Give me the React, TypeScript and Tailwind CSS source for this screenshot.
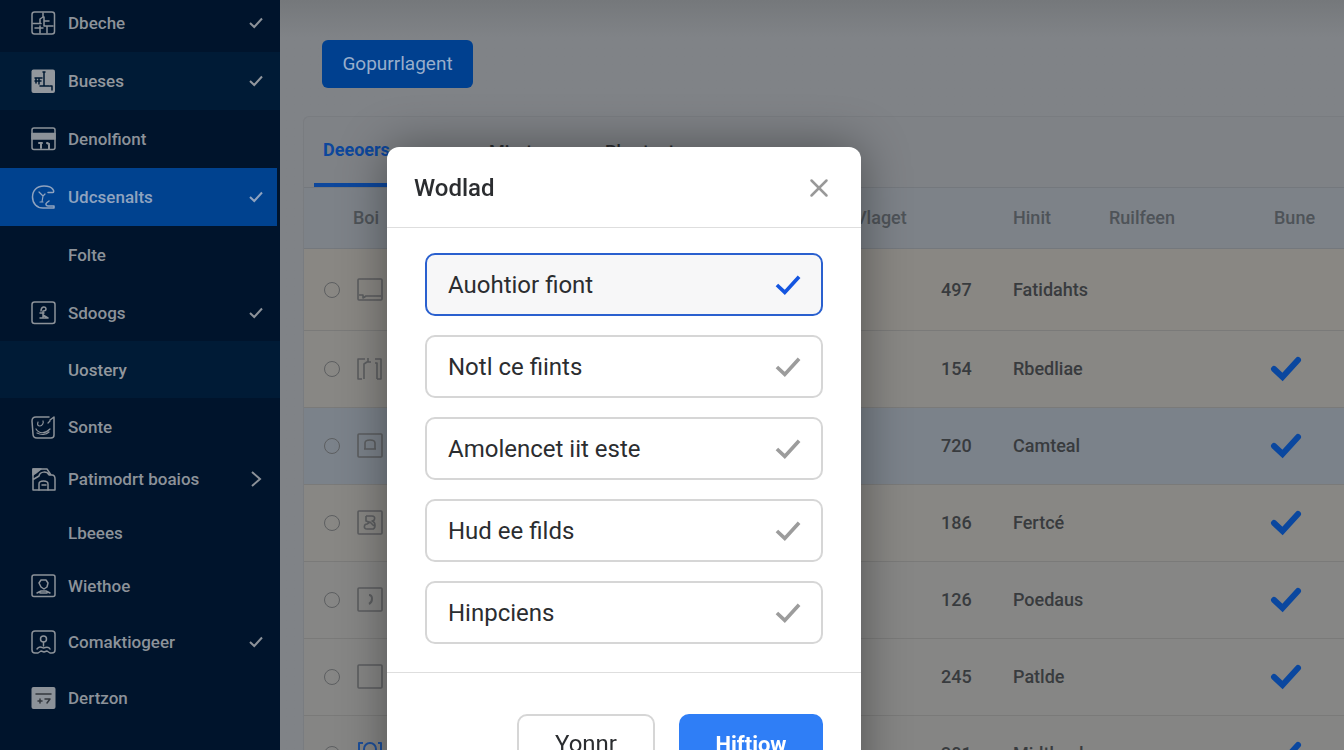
import { useState } from 'react';
import type { ReactNode } from 'react';
import { X } from 'lucide-react';

interface NavItem {
  label: string;
  height: string;
  icon?: ReactNode;
  trailing?: 'check' | 'arrow';
  tone?: 'active' | 'raised';
}

interface TableRow {
  count: string;
  name: string;
  icon: ReactNode;
  background: string;
  checked: boolean;
}

function NavIcon({ children }: { children: ReactNode }) {
  return (
    <svg viewBox="0 0 26 26" className="w-[26px] h-[26px]" fill="none" stroke="currentColor" strokeWidth="1.5" strokeLinecap="round" strokeLinejoin="round" aria-hidden="true">
      {children}
    </svg>
  );
}

function RowIcon({ children }: { children: ReactNode }) {
  return (
    <svg viewBox="0 0 28 28" className="block w-7 h-7" fill="none" stroke="currentColor" strokeWidth="1.6" strokeLinejoin="round" aria-hidden="true">
      {children}
    </svg>
  );
}

function Tick({ className, width, round }: { className: string; width: number; round?: boolean }) {
  return (
    <svg viewBox="0 0 32 26" className={className} fill="none" stroke="currentColor" strokeWidth={width} strokeLinecap={round ? 'round' : 'butt'} aria-hidden="true">
      <path d="M4 13l8.500 8L28 4" />
    </svg>
  );
}

const navItems: NavItem[] = [
  {
    label: 'Dbeche',
    height: 'h-[52px] pb-1.5',
    trailing: 'check',
    icon: (
      <NavIcon>
        <rect x="2" y="2" width="22.500" height="22" rx="2.500" />
        <path d="M13 3v4l-3 2v4M3 13.500h8M14 11h5M14 7v9M10 16v7M15 16h8M5 18h8M17 17v6" />
      </NavIcon>
    ),
  },
  {
    label: 'Bueses',
    height: 'h-[58px]',
    trailing: 'check',
    tone: 'raised',
    icon: (
      <NavIcon>
        <rect x="1.500" y="1.500" width="23.500" height="23.500" rx="2" fill="currentColor" stroke="none" />
        <g stroke="#001a33">
          <path d="M5 10h7M5 13h6M6 10v5M9 10v6M14 4v14h-4M13 4h2M15 18h4M20 18h2v4" />
        </g>
      </NavIcon>
    ),
  },
  {
    label: 'Denolfiont',
    height: 'h-[58px]',
    icon: (
      <NavIcon>
        <rect x="2" y="2" width="23" height="21.500" rx="2" />
        <path d="M2 7.500h23v5.500H2z" fill="currentColor" />
        <path d="M9 17h3M11 17v5M17 17l2 1v5" strokeWidth="2" />
      </NavIcon>
    ),
  },
  {
    label: 'Udcsenalts',
    height: 'h-[58px]',
    trailing: 'check',
    tone: 'active',
    icon: (
      <NavIcon>
        <path d="M18 8.500h4.500c1.500 0 1.500-1.500.5-3C21.500 3 18 2 14 2 7 2 2.500 6.500 2.500 13S7 24 13 24h11v-2h-6c-2 0-3-2-1-3.500l2-1.500" />
        <path d="M9 8l4 4 2-2M13 12l-1 6M10 18h3" strokeWidth="1.200" />
      </NavIcon>
    ),
  },
  { label: 'Folte', height: 'h-[58px]' },
  {
    label: 'Sdoogs',
    height: 'h-[57px]',
    trailing: 'check',
    icon: (
      <NavIcon>
        <rect x="2" y="2" width="23" height="21.500" rx="2.500" />
        <path d="M11 11c0-5 5-5 5-2 0 2-2 2-3 2v6M10 13h4M10 18h8M13 15l5 3" />
      </NavIcon>
    ),
  },
  { label: 'Uostery', height: 'h-[57px]', tone: 'raised' },
  {
    label: 'Sonte',
    height: 'h-[57px]',
    icon: (
      <NavIcon>
        <path d="M19 3H6C3 3 2 4 2 7l1 13c0 3 1 4 4 4h14c2 0 3-1 3-3V3l-4 3" />
        <path d="M8 8c-1 3 0 4 2 4s4-3 3-5M6 15c3 5 9 5 14 0M7 19c4 2 9 2 12-1M18 9l2-2" strokeWidth="1.200" />
      </NavIcon>
    ),
  },
  {
    label: 'Patimodrt boaios',
    height: 'h-[52px] pb-1',
    trailing: 'arrow',
    icon: (
      <NavIcon>
        <path d="M3 12V3h14l4 6M3 12v12h22V13c0-2-1-4-3-4h-3c-2-4-9-4-10 1l-5 3" />
        <path d="M3 9V3h8L6 7z" fill="currentColor" />
        <path d="M9 24v-6c0-4 9-4 9 0v6M12 19h4" />
      </NavIcon>
    ),
  },
  { label: 'Lbeees', height: 'h-[52px]' },
  {
    label: 'Wiethoe',
    height: 'h-[54px]',
    icon: (
      <NavIcon>
        <rect x="2" y="2" width="23" height="21.500" rx="2" />
        <path d="M9 10l2-3h5l2 3-1 4-3 2-3-2zM7 20l4-2h5l4 2M10 20h7" />
      </NavIcon>
    ),
  },
  {
    label: 'Comaktiogeer',
    height: 'h-[58px]',
    trailing: 'check',
    icon: (
      <NavIcon>
        <path d="M5 24c-2 0-3-1-3-3V5c0-2 1-3 3-3h17c2 0 3 1 3 3v16c0 2-1 3-3 3h-2l-3-2-3 1-3-1-3 2z" />
        <circle cx="13.500" cy="10" r="3" />
        <path d="M13.500 13v4M7 20c2-3 4-2 6.500-1 2.500-1 5-2 6.500 1" />
      </NavIcon>
    ),
  },
  {
    label: 'Dertzon',
    height: 'h-[54px]',
    icon: (
      <NavIcon>
        <rect x="1.500" y="2" width="24" height="22" rx="2" fill="currentColor" stroke="none" />
        <path d="M6 9h15M8 16h4M10 14v4M15 14h5l-3 4" stroke="#33383e" />
      </NavIcon>
    ),
  },
];

const rows: TableRow[] = [
  {
    count: '497',
    name: 'Fatidahts',
    background: 'h-[82px] bg-[#898783]',
    checked: false,
    icon: (
      <RowIcon>
        <rect x="2" y="3" width="24" height="21" rx="1" />
        <path d="M3 19h4v3l3-2h15" />
      </RowIcon>
    ),
  },
  {
    count: '154',
    name: 'Rbedliae',
    background: 'h-[77px] bg-[#888784]',
    checked: true,
    icon: (
      <RowIcon>
        <path d="M6 24H2V4h7M19 4h6v20h-4M8 24V9l3-2h4M19 8h2v16M12 3v4" />
      </RowIcon>
    ),
  },
  {
    count: '720',
    name: 'Camteal',
    background: 'h-[77px] bg-[#7b828a]',
    checked: true,
    icon: (
      <RowIcon>
        <rect x="2" y="2" width="24" height="23" rx="1" />
        <path d="M9 17v-6c0-4 10-4 10 0v6zM8 17h12" />
      </RowIcon>
    ),
  },
  {
    count: '186',
    name: 'Fertcé',
    background: 'h-[77px] bg-[#888784]',
    checked: true,
    icon: (
      <RowIcon>
        <rect x="2" y="2" width="24" height="23" rx="1" />
        <path d="M10 7h6c4 0 3 5 0 5 4 1 4 8 0 8h-5c-4 0-3-5 0-5l3-2 4 4M10 7v5l3 1" />
      </RowIcon>
    ),
  },
  {
    count: '126',
    name: 'Poedaus',
    background: 'h-[77px] bg-[#868685]',
    checked: true,
    icon: (
      <RowIcon>
        <rect x="2" y="2" width="24" height="23" rx="1" />
        <path d="M13 9c4 0 4 7 0 9" strokeWidth="2" />
      </RowIcon>
    ),
  },
  {
    count: '245',
    name: 'Patlde',
    background: 'h-[77px] bg-[#868685]',
    checked: true,
    icon: (
      <RowIcon>
        <rect x="2" y="2" width="24" height="23" rx="1" />
      </RowIcon>
    ),
  },
  {
    count: '301',
    name: 'Midtbeal',
    background: 'h-[77px] bg-[#858584]',
    checked: true,
    icon: (
      <RowIcon>
        <g stroke="#1d4f9a" strokeWidth="2">
          <path d="M7 3H3v20h22V3h-3" />
          <circle cx="14" cy="9" r="6" />
        </g>
      </RowIcon>
    ),
  },
];

const options = ['Auohtior fiont', 'Notl ce fiints', 'Amolencet iit este', 'Hud ee filds', 'Hinpciens'];

function Sidebar() {
  const getTone = (tone?: string) => {
    switch (tone) {
      case 'active':
        return 'bg-[#00428f] mr-[3px] pr-[13px] text-[#8fa3bf]';
      case 'raised':
        return 'bg-[#001b36] pr-4 text-[#92979d]';
      default:
        return 'pr-4 text-[#8c9299]';
    }
  };

  return (
    <nav className="w-[280px] shrink-0 bg-[#00142c] overflow-hidden">
      {navItems.map((item) => (
        <a key={item.label} href="#" className={`flex items-center pl-[30px] ${item.height} ${getTone(item.tone)}`}>
          <span className="w-[38px] shrink-0">{item.icon}</span>
          <span className="flex-1 text-[17px] leading-6 font-medium whitespace-nowrap">{item.label}</span>
          {item.trailing === 'check' && <Tick className="w-4 h-3.5" width={4} />}
          {item.trailing === 'arrow' && (
            <svg viewBox="0 0 16 16" className="w-4 h-4" fill="none" stroke="currentColor" strokeWidth="2" aria-hidden="true">
              <path d="M4 1l8 7-8 7" />
            </svg>
          )}
        </a>
      ))}
    </nav>
  );
}

function DataTable() {
  return (
    <table className="w-full table-fixed text-left text-lg leading-6 text-[#383b3e]">
      <colgroup>
        <col className="w-[49px]" />
        <col />
        <col className="w-[86px]" />
        <col className="w-[72px]" />
        <col className="w-24" />
        <col className="w-[165px]" />
        <col className="w-[70px]" />
      </colgroup>
      <thead className="bg-[#7d8288] text-[#4e5358]">
        <tr className="h-[61px] border-y border-[#74787d]">
          <th aria-label="Select" />
          <th className="font-medium">Boi</th>
          <th className="font-medium">Vlaget</th>
          <th aria-label="Count" />
          <th className="font-medium">Hinit</th>
          <th className="font-medium">Ruilfeen</th>
          <th className="font-medium">Bune</th>
        </tr>
      </thead>
      <tbody>
        {rows.map((row) => (
          <tr key={row.count} className={`border-b border-[#7a7a79] ${row.background}`}>
            <td className="pl-5">
              <input
                type="radio"
                name="row"
                aria-label={row.name}
                className="block appearance-none w-4 h-4 rounded-full border border-[#5d5f61]"
              />
            </td>
            <td className="pl-[3px] text-[#5c5e60]">{row.icon}</td>
            <td />
            <td className="font-medium">{row.count}</td>
            <td className="font-medium whitespace-nowrap">{row.name}</td>
            <td />
            <td>{row.checked && <Tick className="block w-8 h-[26px] -ml-1 text-[#0a479f]" width={6} round />}</td>
          </tr>
        ))}
      </tbody>
    </table>
  );
}

function OptionsDialog() {
  const [selected, setSelected] = useState(options[0]);

  return (
    <div className="fixed inset-0 overflow-hidden pt-[147px] pl-[387px]">
      <div role="dialog" aria-labelledby="dialog-title" className="w-[474px] bg-white rounded-xl shadow-[0_0_48px_rgba(0,0,0,0.4)] text-[#2b2d30]">
        <div className="flex items-center justify-between h-[81px] pt-0.5 px-[27px] border-b border-[#dedede]">
          <h2 id="dialog-title" className="text-2xl font-medium">Wodlad</h2>
          <button type="button" aria-label="Close" className="text-[#999999]">
            <X className="w-[30px] h-[30px]" strokeWidth={2} />
          </button>
        </div>
        <div className="flex flex-col gap-[19px] px-[38px] pt-[25px] pb-7 border-b border-[#dedede]">
          {options.map((option) => (
            <label
              key={option}
              className={`relative flex items-center justify-between h-[63px] pl-[21px] pr-[18px] border-2 rounded-[10px] text-2xl ${
                selected === option ? 'border-[#2a60cf] bg-[#f7f7f8]' : 'border-[#d6d6d6] bg-white'
              }`}
            >
              <input type="radio" name="option" className="sr-only" checked={selected === option} onChange={() => setSelected(option)} />
              {option}
              <Tick className={selected === option ? 'w-[30px] h-6 text-[#1455e0]' : 'w-[30px] h-6 text-[#9c9c9c]'} width={4} />
            </label>
          ))}
        </div>
        <div className="flex justify-end gap-6 px-[38px] pt-[41px] pb-10">
          <button type="button" className="w-[138px] h-[60px] border-2 border-[#d6d6d6] rounded-[10px] text-2xl">Yonnr</button>
          <button type="button" className="w-36 h-[60px] rounded-[10px] bg-[#2f7ef6] text-white text-[22px] font-bold">Hiftiow</button>
        </div>
      </div>
    </div>
  );
}

export default function App() {
  return (
    <div className="flex h-screen overflow-hidden bg-[#808387] font-['Roboto','Liberation_Sans',sans-serif]">
      <Sidebar />
      <main className="flex-1 min-w-0 pl-[23px] bg-linear-to-b from-[#75787b] to-[#808387] to-5%">
        <div className="h-[116px] pt-10 pl-[19px]">
          <button type="button" className="h-12 w-[151px] rounded-md bg-[#00408f] text-[#98aecb] text-[19px]">
            Gopurrlagent
          </button>
        </div>
        <section className="border-l border-t border-[#797c80] rounded-tl-md bg-[#7f8286]">
          <div role="tablist" className="flex h-[70px] pl-2.5 text-lg text-[#2b2d30]">
            <button type="button" role="tab" aria-selected="true" className="w-[175px] pl-[9px] text-left font-bold border-b-4 border-[#0d479c] text-[#0d479c]">
              Deeoers
            </button>
            <button type="button" role="tab" aria-selected="false" className="w-[116px] text-left font-medium">Miurtenns</button>
            <button type="button" role="tab" aria-selected="false" className="w-[116px] text-left font-medium">Phrptoet</button>
          </div>
          <DataTable />
        </section>
      </main>
      <OptionsDialog />
    </div>
  );
}
